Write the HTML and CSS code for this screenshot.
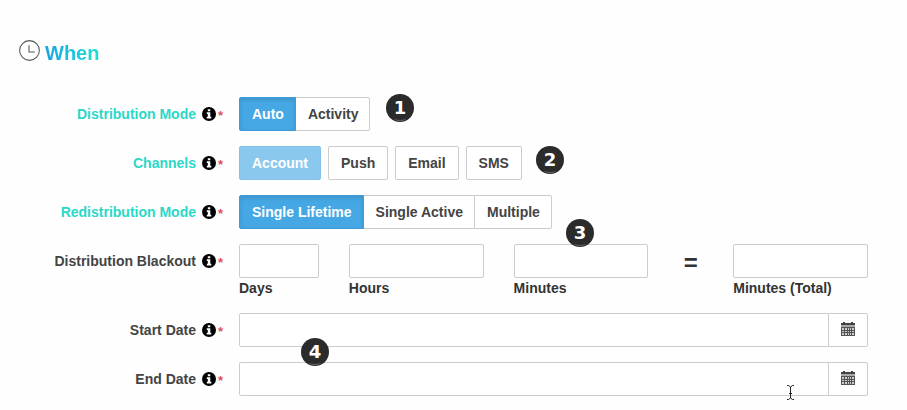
FILE: index.html
```
<!DOCTYPE html>
<html lang="en">
<head>
  <meta charset="UTF-8">
  <meta name="viewport" content="width=device-width, initial-scale=1.0">
  <title>When</title>
  <link rel="stylesheet" href="styles.css">
</head>
<body>
  <!-- shared icons -->
  <svg class="sprite" aria-hidden="true">
    <symbol id="icon-info" viewBox="0 0 14 14">
      <circle cx="7" cy="7" r="7" fill="#000"/>
      <path d="M5.800 2.200h2.500v2H5.800zM4.800 5.300h3.500v4.400h1v1.700H4.800V9.700h1V7h-1z" fill="#fff"/>
    </symbol>
    <symbol id="icon-calendar" viewBox="0 0 14 14">
      <path d="M0 1h2V0h2v1h6V0h2v1h2v2H0z" fill="#444"/>
      <path d="M0 3h14v2H0z" fill="#aaa"/>
      <path d="M0 5h14v9H0z" fill="#555"/>
      <path d="M1 6h2v2H1zM4 6h2v2H4zM7 6h1v2H7zM9 6h1v2H9zM11 6h2v2h-2zM1 9h2v1H1zM4 9h2v1H4zM7 9h1v1H7zM9 9h1v1H9zM11 9h2v1h-2zM1 11h2v2H1zM4 11h2v2H4zM7 11h1v2H7zM9 11h1v2H9zM11 11h2v2h-2z" fill="#ccc"/>
    </symbol>
  </svg>

  <form class="when-form">
    <h2 class="section-title">
      <svg class="clock" viewBox="0 0 20 20" aria-hidden="true">
        <circle cx="10" cy="10" r="9.400" fill="none" stroke="#555"/>
        <path d="M9.500 5v6.500H15" fill="none" stroke="#555"/>
      </svg>
      <span>When</span>
    </h2>

    <div class="form-row">
      <div class="form-label linked"><span id="mode-label">Distribution Mode</span><svg class="info"><use href="#icon-info"/></svg><span class="required">*</span></div>
      <div class="controls">
        <div class="btn-group" role="group" aria-labelledby="mode-label">
          <button type="button" class="btn active">Auto</button>
          <button type="button" class="btn">Activity</button>
        </div>
        <span class="marker marker-1">1</span>
      </div>
    </div>

    <div class="form-row">
      <div class="form-label linked"><span id="channels-label">Channels</span><svg class="info"><use href="#icon-info"/></svg><span class="required">*</span></div>
      <div class="controls">
        <div class="btn-list" role="group" aria-labelledby="channels-label">
          <button type="button" class="btn locked">Account</button>
          <button type="button" class="btn">Push</button>
          <button type="button" class="btn">Email</button>
          <button type="button" class="btn">SMS</button>
        </div>
        <span class="marker marker-2">2</span>
      </div>
    </div>

    <div class="form-row">
      <div class="form-label linked"><span id="redist-label">Redistribution Mode</span><svg class="info"><use href="#icon-info"/></svg><span class="required">*</span></div>
      <div class="controls">
        <div class="btn-group" role="group" aria-labelledby="redist-label">
          <button type="button" class="btn active">Single Lifetime</button>
          <button type="button" class="btn">Single Active</button>
          <button type="button" class="btn">Multiple</button>
        </div>
        <span class="marker marker-3">3</span>
      </div>
    </div>

    <div class="form-row">
      <div class="form-label"><span id="blackout-label">Distribution Blackout</span><svg class="info"><use href="#icon-info"/></svg><span class="required">*</span></div>
      <div class="controls blackout" role="group" aria-labelledby="blackout-label">
        <div class="unit unit-days">
          <input type="text" id="days" class="field">
          <label for="days">Days</label>
        </div>
        <div class="unit">
          <input type="text" id="hours" class="field">
          <label for="hours">Hours</label>
        </div>
        <div class="unit">
          <input type="text" id="minutes" class="field">
          <label for="minutes">Minutes</label>
        </div>
        <span class="equals">=</span>
        <div class="unit">
          <input type="text" id="total" class="field">
          <label for="total">Minutes (Total)</label>
        </div>
      </div>
    </div>

    <div class="form-row">
      <div class="form-label"><label for="start-date">Start Date</label><svg class="info"><use href="#icon-info"/></svg><span class="required">*</span></div>
      <div class="controls date">
        <input type="text" id="start-date" class="field">
        <button type="button" class="date-btn" aria-label="Pick start date"><svg class="calendar"><use href="#icon-calendar"/></svg></button>
        <span class="marker marker-4">4</span>
      </div>
    </div>

    <div class="form-row">
      <div class="form-label"><label for="end-date">End Date</label><svg class="info"><use href="#icon-info"/></svg><span class="required">*</span></div>
      <div class="controls date">
        <input type="text" id="end-date" class="field">
        <button type="button" class="date-btn" aria-label="Pick end date"><svg class="calendar"><use href="#icon-calendar"/></svg></button>
        <svg class="cursor" viewBox="0 0 9 17" aria-hidden="true">
          <path d="M1 1.500h1.500l2 1.500 2-1.500H8M4.500 3v11M1 15.500h1.500l2-1.500 2 1.500H8M3 9.500h3" fill="none" stroke="#222"/>
        </svg>
      </div>
    </div>
  </form>
</body>
</html>
```

FILE: styles.css
```
* {
  box-sizing: border-box;
}
body {
  margin: 0;
  background: #fefefe;
  color: #444;
  font-family: "Liberation Sans", Arial, sans-serif;
  font-size: 14px;
  font-weight: bold;
  line-height: 20px;
}
.sprite {
  display: none;
}
.when-form {
  display: flex;
  flex-direction: column;
  gap: 15px;
  padding: 40px 39px 14px 19px;
}

/* section heading */
.section-title {
  display: flex;
  gap: 5px;
  margin: 0 0 16px;
  font-size: 20px;
  line-height: 26px;
}
.section-title span {
  background: linear-gradient(90deg, #1ba4e6, #1ce0d0);
  background-clip: text;
  -webkit-background-clip: text;
  color: transparent;
}
.clock {
  width: 21px;
  height: 21px;
}

/* label column + controls */
.form-row {
  display: grid;
  grid-template-columns: 205px 1fr;
  gap: 15px;
}
.form-label {
  display: flex;
  justify-content: flex-end;
  align-items: center;
  height: 34px;
}
.linked {
  color: #2bd8c7;
}
.info {
  width: 14px;
  height: 14px;
  margin: 0 2px 0 6px;
}
.required {
  width: 6px;
  padding-top: 4px;
  color: #d9535e;
  font-size: 13px;
}
.controls {
  position: relative;
}

/* buttons */
.btn {
  height: 34px;
  padding: 0 12px;
  border: 1px solid #ccc;
  border-radius: 2px;
  background: #fff;
  color: #444;
  font: inherit;
  white-space: nowrap;
}
.btn-group,
.btn-list {
  display: flex;
}
.btn-list {
  gap: 7px;
}
.btn-group .btn {
  padding-right: 11px;
}
.btn-group .btn + .btn {
  margin-left: -1px;
  border-radius: 0;
}
.btn-group .btn:first-child {
  border-radius: 2px 0 0 2px;
}
.btn-group .btn:last-child {
  border-radius: 0 2px 2px 0;
}
.btn.active {
  position: relative;
  border-color: #3b9cda;
  background: #45a7e4;
  box-shadow: inset 0 2px 4px rgba(0, 0, 0, 0.12);
  color: #fff;
}
.btn.locked {
  border-color: #83c1ea;
  background: #8ac8ee;
  color: #fff;
}

/* inputs */
.field {
  width: 100%;
  height: 34px;
  padding: 0 12px;
  border: 1px solid #ccc;
  border-radius: 2px;
  background: #fff;
  font: inherit;
}
.blackout {
  display: grid;
  grid-template-columns: repeat(12, minmax(0, 1fr));
  column-gap: 30px;
}
.unit {
  display: flex;
  flex-direction: column;
  grid-column: span 3;
  color: #333;
  white-space: nowrap;
}
.unit-days {
  grid-column: span 2;
}
.equals {
  color: #333;
  font-size: 24px;
  line-height: 38px;
  text-align: center;
}
.date {
  display: flex;
}
.date .field {
  flex: 1;
  border-radius: 2px 0 0 2px;
}
.date-btn {
  display: flex;
  justify-content: center;
  align-items: center;
  width: 40px;
  height: 34px;
  margin-left: -1px;
  padding: 0 1px 2px 0;
  border: 1px solid #ccc;
  border-radius: 0 2px 2px 0;
  background: #fff;
}
.calendar {
  width: 14px;
  height: 14px;
}

/* numbered markers lying over the form */
.marker {
  position: absolute;
  z-index: 2;
  width: 28px;
  height: 28px;
  border-radius: 50%;
  background: #2b2b2b;
  color: #fff;
  font-family: "DejaVu Sans", sans-serif;
  font-size: 18px;
  line-height: 28px;
  text-align: center;
}
.marker::after {
  content: "";
  position: absolute;
  left: 8px;
  bottom: 1px;
  width: 12px;
  height: 4px;
  border-bottom: 1px solid #666;
  border-radius: 50%;
}
.marker-1 {
  left: 147px;
  top: -3px;
}
.marker-2 {
  left: 297px;
  top: 0;
}
.marker-3 {
  left: 327px;
  top: 24px;
}
.marker-4 {
  left: 62px;
  top: 25px;
}
.cursor {
  position: absolute;
  right: 73px;
  top: 22px;
  width: 9px;
  height: 17px;
}
```
